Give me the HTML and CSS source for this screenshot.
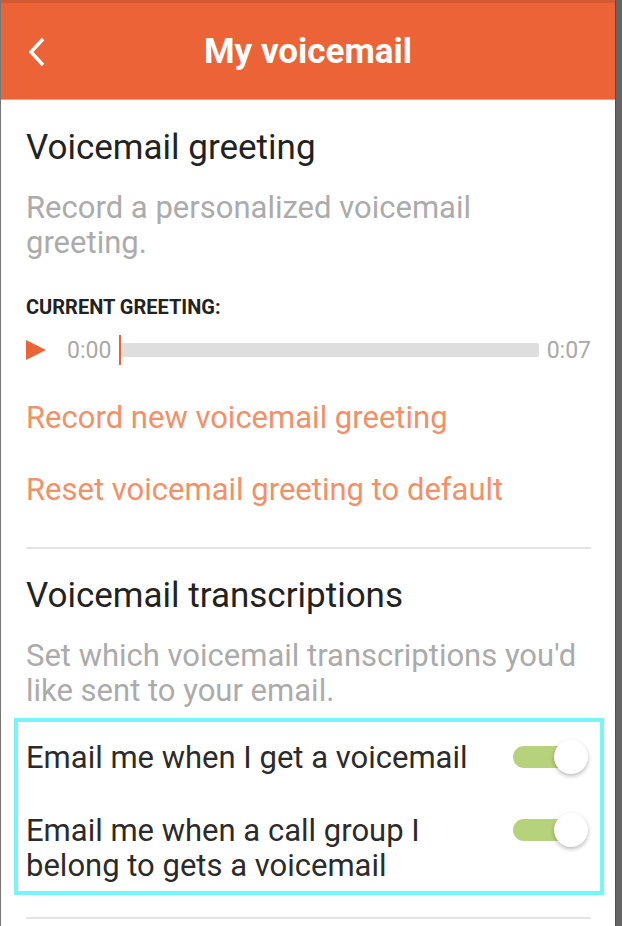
FILE: index.html
```html
<!DOCTYPE html>
<html lang="en">

<head>
    <meta charset="UTF-8">
    <meta name="viewport" content="width=device-width, initial-scale=1.0">
    <title>My voicemail</title>
    <link rel="stylesheet" href="styles.css">
</head>

<body>
    <div class="frame">
        <div class="screen">
            <header class="topbar">
                <a class="back" href="#">
                    <svg width="20" height="32" viewBox="0 0 20 32">
                        <polyline points="16,3 4,16 16,29" fill="none" stroke="#fff" stroke-width="3.5" />
                    </svg>
                </a>
                <h1>My voicemail</h1>
            </header>

            <section class="section first">
                <h2>Voicemail greeting</h2>
                <p class="desc">Record a personalized voicemail greeting.</p>

                <div class="label">CURRENT GREETING:</div>
                <div class="player">
                    <svg class="play" width="20" height="20" viewBox="0 0 20 20">
                        <polygon points="0,0 20,10 0,20" fill="#ec6338" />
                    </svg>
                    <span class="time">0:00</span>
                    <div class="track">
                        <div class="marker"></div>
                    </div>
                    <span class="time">0:07</span>
                </div>

                <a class="action" href="#">Record new voicemail greeting</a>
                <a class="action" href="#">Reset voicemail greeting to default</a>
            </section>

            <hr class="divider">

            <section class="section">
                <h2>Voicemail transcriptions</h2>
                <p class="desc">Set which voicemail transcriptions you'd like sent to your email.</p>

                <div class="options">
                    <div class="option">
                        <span>Email me when I get a voicemail</span>
                        <label class="switch on"><span class="knob"></span></label>
                    </div>
                    <div class="option">
                        <span>Email me when a call group I belong to gets a voicemail</span>
                        <label class="switch on"><span class="knob"></span></label>
                    </div>
                </div>
            </section>

            <hr class="divider last">
        </div>
    </div>
</body>

</html>
```

FILE: styles.css
```css
body {
    margin: 0;
    font-family: Roboto, "Liberation Sans", sans-serif;
    background: #fff;
}

.frame {
    display: flex;
    height: 926px;
    overflow: hidden;
    border-left: 1px solid #777;
}

.screen {
    width: 614px;
    background: #fff;
    border-right: 1px solid #4f4f4f;
}

.frame::after {
    content: "";
    flex: 1;
    background: #656565;
}

.topbar {
    position: relative;
    height: 96px;
    background: #ec6338;
    border-top: 3px solid #d65a31;
    border-bottom: 1px solid #f3a080;
    display: flex;
    align-items: center;
    justify-content: center;
}

.topbar h1 {
    margin: 0;
    color: #fff;
    font-size: 35px;
    font-weight: bold;
}

.back {
    position: absolute;
    left: 26px;
    top: 33px;
    display: block;
    line-height: 0;
}

.section {
    padding: 0 24px 0 25px;
}

.section h2 {
    margin: 27px 0 0;
    font-size: 35px;
    font-weight: normal;
    line-height: 40px;
    color: #222;
}

.section.first h2 {
    margin-top: 28px;
}

.desc {
    margin: 22px 0 0;
    font-size: 31px;
    line-height: 35px;
    color: #ababab;
}

.label {
    margin-top: 35px;
    font-size: 20px;
    font-weight: bold;
    line-height: 24px;
    color: #222;
}

.player {
    margin-top: 16px;
    height: 30px;
    display: flex;
    align-items: center;
}

.play {
    margin-right: 21px;
}

.time {
    font-size: 23px;
    color: #a9a9a9;
}

.track {
    position: relative;
    flex: 1;
    height: 14px;
    margin: 0 8px 0 8px;
    background: #dedede;
    border-radius: 2px;
}

.marker {
    position: absolute;
    left: 0;
    top: -8px;
    width: 2px;
    height: 30px;
    background: #ec6338;
}

.action {
    display: block;
    margin-top: 33px;
    font-size: 31px;
    line-height: 40px;
    color: #f29069;
    text-decoration: none;
}

.action + .action {
    margin-top: 32px;
}

.divider {
    margin: 37px 24px 0 25px;
    border: 0;
    height: 2px;
    background: #e4e4e4;
}

.divider.last {
    margin-top: 22px;
}

.options {
    margin: 10px -13px 0 -12px;
    border: 4px solid #74f7f9;
    padding: 18px 12px 8px 8px;
}

.option {
    display: flex;
    justify-content: space-between;
    align-items: flex-start;
    font-size: 31px;
    line-height: 35px;
    color: #2b2b2b;
}

.option + .option {
    margin-top: 38px;
}

.option span {
    max-width: 450px;
}

.switch {
    position: relative;
    flex: none;
    width: 75px;
    height: 35px;
}

.switch::before {
    content: "";
    position: absolute;
    left: 0;
    top: 6px;
    width: 62px;
    height: 22px;
    border-radius: 11px;
    background: #b7d27c;
}

.switch .knob {
    position: absolute;
    right: 0;
    top: 0;
    width: 34px;
    height: 34px;
    border-radius: 50%;
    background: #fff;
    box-shadow: 0 2px 4px rgba(0, 0, 0, 0.28);
}
```
